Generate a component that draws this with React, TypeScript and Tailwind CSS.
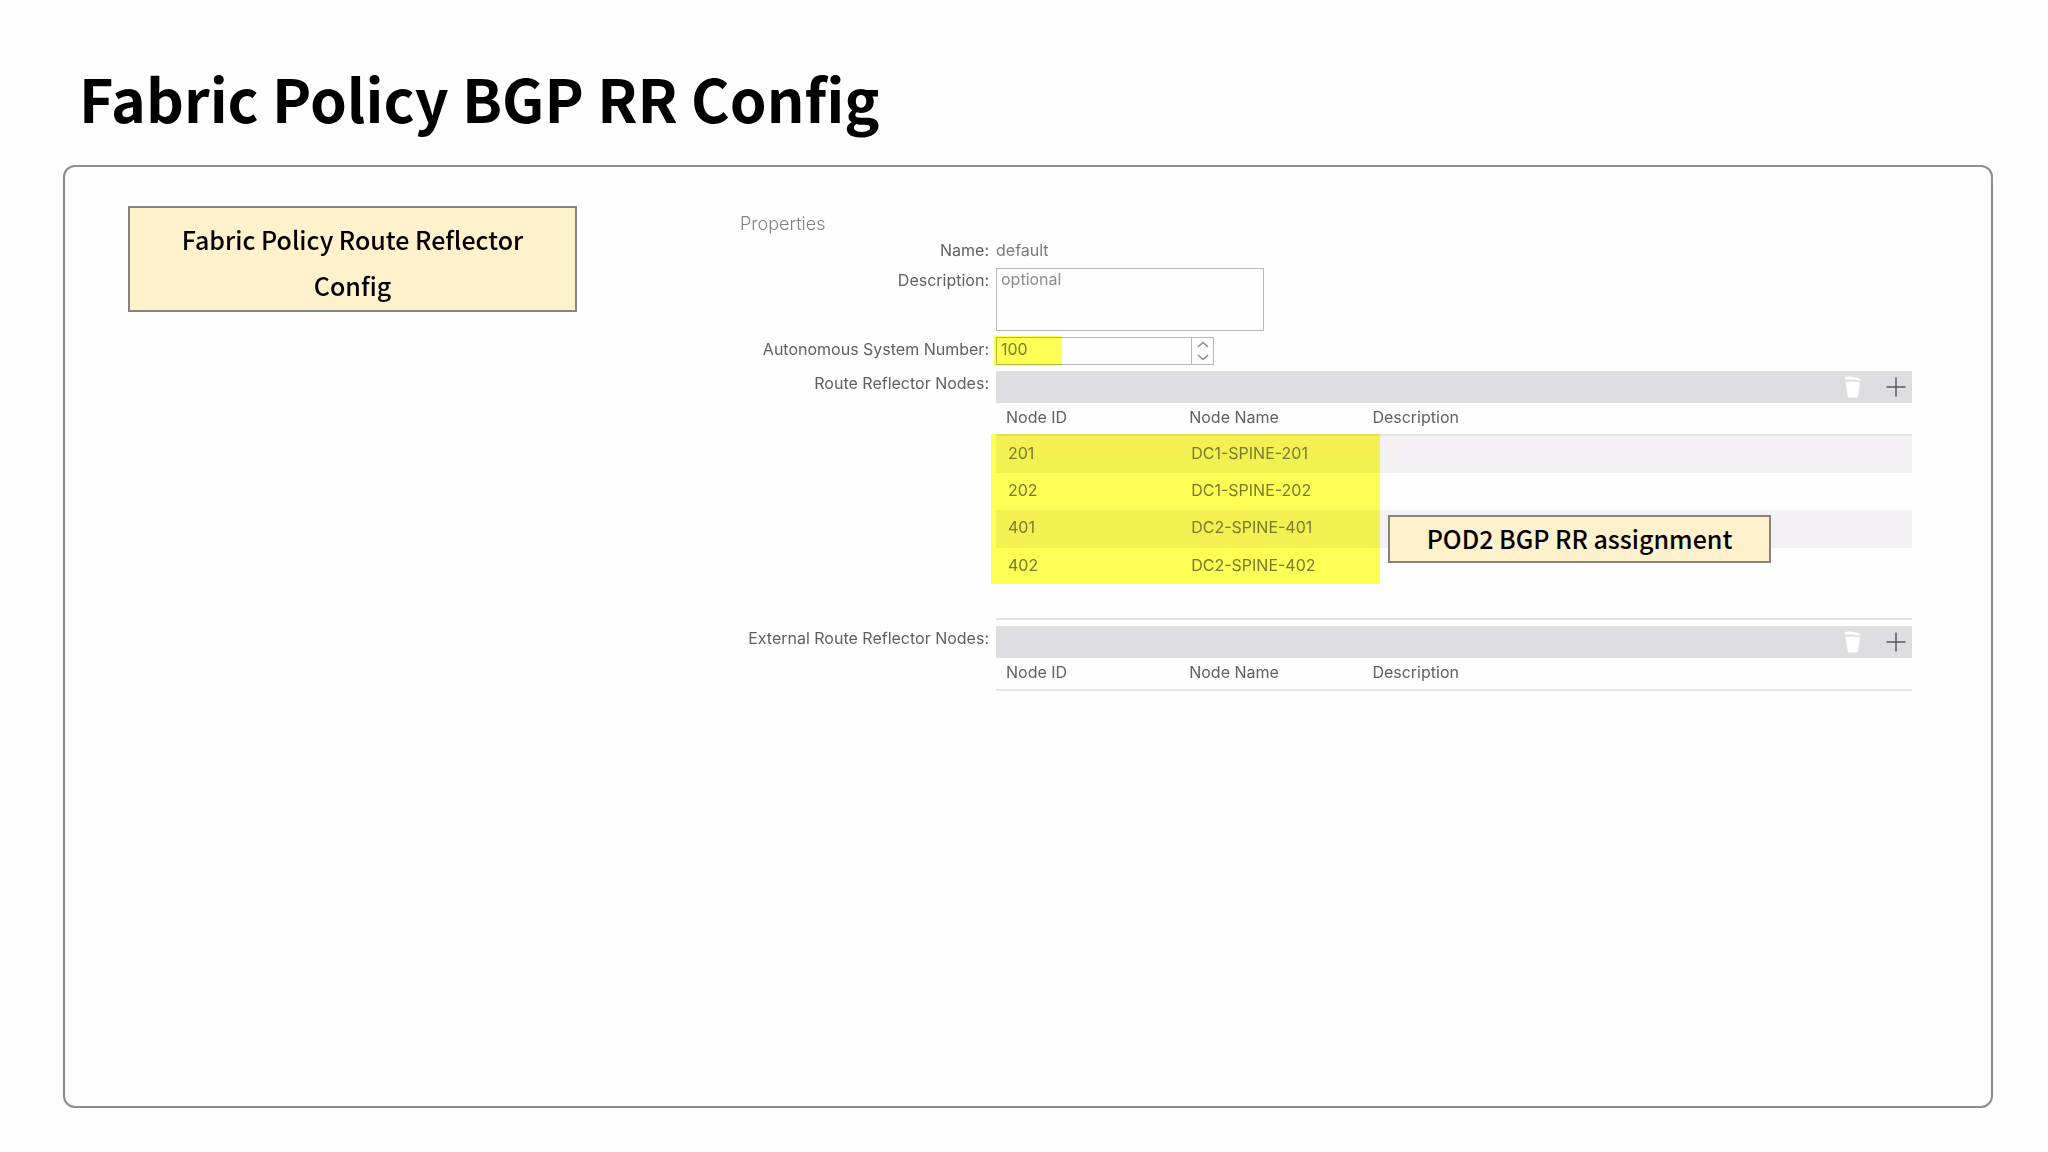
import React, { useState } from 'react'

type Node = { id: string; name: string; description?: string }

const REFLECTOR_NODES: Node[] = [
  { id: '201', name: 'DC1-SPINE-201' },
  { id: '202', name: 'DC1-SPINE-202' },
  { id: '401', name: 'DC2-SPINE-401' },
  { id: '402', name: 'DC2-SPINE-402' },
]

const TrashIcon = () => (
  <svg width="18" height="22" viewBox="0 0 18 22" fill="#fff" aria-hidden="true">
    <path d="M1 1.2C3 .3 7 .4 10 1l4.500 1.300c1 .4 1.800 1.200 2 2.500C12 3.500 7 3.300 1.300 3.500z" />
    <path d="M1.500 6.200c4.500-.9 9.500-.9 14.500 0L14.200 20c-.1.900-.7 1.500-1.500 1.500H5.300c-.8 0-1.400-.6-1.500-1.500z" />
  </svg>
)

const PlusIcon = () => (
  <svg width="20" height="20" viewBox="0 0 20 20" fill="none" stroke="#58585b" strokeWidth="1.500" aria-hidden="true">
    <path d="M10 .5v19M.5 10h19" />
  </svg>
)

const Chevron: React.FC<{ d: string }> = ({ d }) => (
  <svg width="12" height="7" viewBox="0 0 12 7" fill="none" stroke="#8c8c8f" strokeWidth="1.600" aria-hidden="true">
    <path d={d} />
  </svg>
)

const Note: React.FC<{ className?: string; children: React.ReactNode }> = ({ className = '', children }) => (
  <p
    className={`border-2 border-[#86847c] bg-[#fff1cc] text-center font-['Noto_Sans_CJK_KR','Noto_Sans',sans-serif] text-[25px] font-medium text-black ${className}`}
  >
    {children}
  </p>
)

const NodeTable: React.FC<{ label: string; nodes: Node[] }> = ({ label, nodes }) => (
  <div>
    <div className="flex h-8 items-center justify-end gap-6 bg-[#dedde0] pr-1.5">
      <button type="button" aria-label={`Delete from ${label}`}>
        <TrashIcon />
      </button>
      <button type="button" aria-label={`Add to ${label}`}>
        <PlusIcon />
      </button>
    </div>
    <table aria-label={label} className="w-full table-fixed border-collapse text-left">
      <thead>
        <tr className="h-8 border-b-2 border-[#e4e3e6]">
          <th className="w-1/5 pb-1 pl-2.5 font-normal">Node ID</th>
          <th className="w-1/5 pb-1 pl-2.5 font-normal">Node Name</th>
          <th className="pb-1 pl-2.5 font-normal">Description</th>
        </tr>
      </thead>
      <tbody>
        {nodes.map((n) => (
          <tr key={n.id} className="h-[37px] text-[#7a7a7d] odd:h-[38px] odd:bg-[#f3f1f4]">
            <td className="pb-1 pl-3">{n.id}</td>
            <td className="pb-1 pl-3">{n.name}</td>
            <td className="pb-1 pl-3">{n.description}</td>
          </tr>
        ))}
      </tbody>
    </table>
  </div>
)

export default function App() {
  const [asn, setAsn] = useState(100)

  return (
    <div className="flex min-h-screen flex-col bg-[#fefefe] pr-[55px] pb-11 pl-[63px]">
      <h1 className="flex h-[165px] items-center pt-[30px] pl-4 font-['Noto_Sans_CJK_KR','Noto_Sans',sans-serif] text-[59px] leading-none font-bold text-black">
        Fabric Policy BGP RR Config
      </h1>

      <main className="flex flex-1 items-start gap-[163px] rounded-xl border-2 border-[#8c8c8c] pt-[39px] pr-[79px] pl-[63px]">
        <Note className="w-[449px] shrink-0 px-8 pt-2 pb-0.5 leading-[46px]">Fabric Policy Route Reflector Config</Note>

        <form className="min-w-0 flex-1 pt-1 font-['Inter',sans-serif] text-[16px] leading-6 text-[#606063]">
          <h2 className="text-[18px] leading-7 font-light text-[#828285]">Properties</h2>
          <div className="grid grid-cols-[249px_1fr] gap-x-[7px] gap-y-1.5">
            <span className="text-right">Name:</span>
            <span className="text-[#7c7c7f]">default</span>

            <label htmlFor="description" className="text-right">Description:</label>
            <textarea
              id="description"
              placeholder="optional"
              className="block h-[63px] w-[268px] resize-none border border-[#b8b8ba] px-1 leading-5 placeholder:text-[#8c8c8f]"
            />

            <label htmlFor="asn" className="text-right">Autonomous System Number:</label>
            <div className="relative flex h-7 w-[218px] border border-[#b8b8ba]">
              <input
                id="asn"
                inputMode="numeric"
                value={asn}
                onChange={(e) => setAsn(Number(e.target.value) || 0)}
                className="min-w-0 flex-1 px-1 pb-1 text-[#7a7a7d]"
              />
              <div className="flex w-[22px] flex-col items-center justify-center gap-1.5 border-l border-[#b8b8ba]">
                <button type="button" aria-label="Increase" className="flex" onClick={() => setAsn(asn + 1)}>
                  <Chevron d="M1 6l5-4.500L11 6" />
                </button>
                <button type="button" aria-label="Decrease" className="flex" onClick={() => setAsn(asn - 1)}>
                  <Chevron d="M1 1l5 4.500L11 1" />
                </button>
              </div>
              <span className="pointer-events-none absolute -top-0.5 -bottom-0.5 -left-[3px] w-[68px] bg-[#ffff55] mix-blend-multiply" />
            </div>

            <span className="text-right">Route Reflector Nodes:</span>
            <div className="relative border-b-2 border-[#e4e3e6] pb-[33px]">
              <NodeTable label="Route Reflector Nodes" nodes={REFLECTOR_NODES} />
              <span className="pointer-events-none absolute top-[63px] -left-[5px] h-[150px] w-[389px] bg-[#ffff55] mix-blend-multiply" />
              <Note className="absolute top-[144px] left-[392px] h-12 w-[383px] leading-[42px]">POD2 BGP RR assignment</Note>
            </div>

            <span className="text-right">External Route Reflector Nodes:</span>
            <NodeTable label="External Route Reflector Nodes" nodes={[]} />
          </div>
        </form>
      </main>
    </div>
  )
}
